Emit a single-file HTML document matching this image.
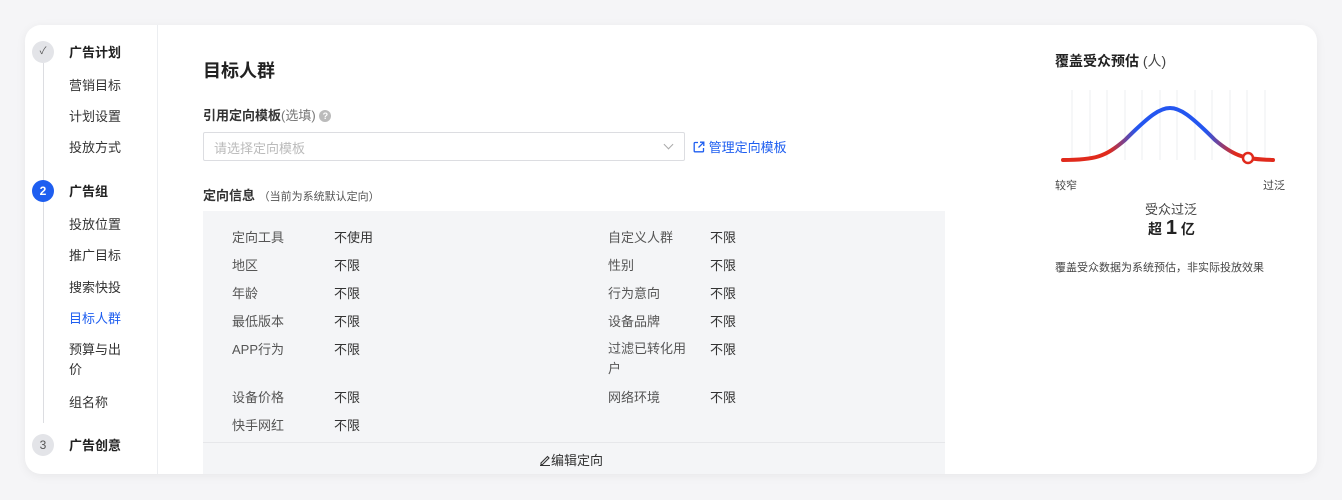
<!DOCTYPE html>
<html><head><meta charset="utf-8"><style>
*{margin:0;padding:0;box-sizing:border-box}
body{width:1342px;height:500px;background:#f5f5f7;font-family:"Liberation Sans","Noto Sans CJK SC",sans-serif;position:relative;overflow:hidden;color:#333}
.card{position:absolute;left:25px;top:25px;width:1292px;height:449px;background:#fff;border-radius:16px;box-shadow:0 2px 10px rgba(0,0,0,.06);overflow:hidden}
.side{position:absolute;left:0;top:0;width:133px;height:449px;border-right:1px solid #eceef1}
.t{position:absolute;font-size:13px;white-space:nowrap;color:#333}
.h{font-weight:bold;color:#222}
.c{position:absolute;width:22px;height:22px;border-radius:50%;left:7px;font-size:12px;text-align:center;line-height:22px;background:#e3e4e8;color:#555}
.a{position:absolute;font-size:13px;color:#333}
.g{color:#555}
</style></head><body>
<div class="card">
<div class="side">
<div style="position:absolute;left:18px;top:38px;width:1px;height:360px;background:#dcdde1"></div>
<div class="c" style="top:16px;font-size:10px">✓</div>
<div class="t h" style="left:44px;top:17px">广告计划</div>
<div class="t" style="left:44px;top:50px">营销目标</div>
<div class="t" style="left:44px;top:81px">计划设置</div>
<div class="t" style="left:44px;top:112px">投放方式</div>
<div class="c" style="top:155px;background:#1e5ef0;color:#fff;font-weight:bold">2</div>
<div class="t h" style="left:44px;top:156px">广告组</div>
<div class="t" style="left:44px;top:189px">投放位置</div>
<div class="t" style="left:44px;top:220px">推广目标</div>
<div class="t" style="left:44px;top:252px">搜索快投</div>
<div class="t" style="left:44px;top:283px;color:#1e5ef0">目标人群</div>
<div class="t" style="left:44px;top:315px;line-height:20px;white-space:normal;width:60px">预算与出价</div>
<div class="t" style="left:44px;top:367px">组名称</div>
<div class="c" style="top:409px">3</div>
<div class="t h" style="left:44px;top:410px">广告创意</div>
</div>
<div class="t h" style="left:178px;top:32px;font-size:18px">目标人群</div>
<div class="t" style="left:178px;top:80px;font-weight:bold">引用定向模板<span style="font-weight:normal;color:#777">(选填)</span> <span style="display:inline-block;width:12px;height:12px;border-radius:50%;background:#bbb;color:#fff;font-size:9px;text-align:center;line-height:12px;vertical-align:1px">?</span></div>
<div style="position:absolute;left:178px;top:107px;width:482px;height:29px;border:1px solid #dcdde1;border-radius:2px"><span class="t" style="left:10px;top:5px;color:#bbb">请选择定向模板</span><span style="position:absolute;right:12px;top:8px;width:7px;height:7px;border-right:1px solid #aaa;border-bottom:1px solid #aaa;transform:rotate(45deg)"></span></div>
<div class="t" style="left:668px;top:112px;color:#1e5ef0"><svg width="12" height="12" viewBox="0 0 12 12" style="vertical-align:-1px" fill="none" stroke="#1e5ef0" stroke-width="1.3"><path d="M5 1.5H2a.8.8 0 0 0-.8.8v7.7a.8.8 0 0 0 .8.8h7.7a.8.8 0 0 0 .8-.8V7M7 1.2h3.8V5M10.6 1.4 5.5 6.5"/></svg> 管理定向模板</div>
<div class="t" style="left:178px;top:160px;font-weight:bold">定向信息 <span style="font-weight:normal;font-size:11px;color:#555">（当前为系统默认定向）</span></div>
<div style="position:absolute;left:178px;top:186px;width:742px;height:263px;background:#f4f5f7">
<div style="position:absolute;left:0;top:231px;width:742px;height:1px;background:#e6e7ea"></div>
<div class="t" style="left:336px;top:239px;color:#333"><svg width="12" height="12" viewBox="0 0 12 12" fill="none" stroke="#333" stroke-width="1.1" style="vertical-align:-1px"><path d="M2 9 8.5 2.5l1.5 1.5L3.5 10.5H2zM1 11.5h10"/></svg>编辑定向</div>
</div>
<div class="a g" style="left:207px;top:202px">定向工具</div><div class="a" style="left:309px;top:202px">不使用</div>
<div class="a g" style="left:207px;top:230px">地区</div><div class="a" style="left:309px;top:230px">不限</div>
<div class="a g" style="left:207px;top:258px">年龄</div><div class="a" style="left:309px;top:258px">不限</div>
<div class="a g" style="left:207px;top:286px">最低版本</div><div class="a" style="left:309px;top:286px">不限</div>
<div class="a g" style="left:207px;top:314px">APP行为</div><div class="a" style="left:309px;top:314px">不限</div>
<div class="a g" style="left:207px;top:362px">设备价格</div><div class="a" style="left:309px;top:362px">不限</div>
<div class="a g" style="left:207px;top:390px">快手网红</div><div class="a" style="left:309px;top:390px">不限</div>
<div class="a g" style="left:583px;top:202px">自定义人群</div><div class="a" style="left:685px;top:202px">不限</div>
<div class="a g" style="left:583px;top:230px">性别</div><div class="a" style="left:685px;top:230px">不限</div>
<div class="a g" style="left:583px;top:258px">行为意向</div><div class="a" style="left:685px;top:258px">不限</div>
<div class="a g" style="left:583px;top:286px">设备品牌</div><div class="a" style="left:685px;top:286px">不限</div>
<div class="a g" style="left:583px;top:314px;width:90px;line-height:20px">过滤已转化用户</div><div class="a" style="left:685px;top:314px">不限</div>
<div class="a g" style="left:583px;top:362px">网络环境</div><div class="a" style="left:685px;top:362px">不限</div>
<div class="t h" style="left:1030px;top:26px;font-size:14px">覆盖受众预估 <span style="font-weight:normal;color:#444">(人)</span></div>
<svg style="position:absolute;left:1030px;top:60px" width="230" height="95" viewBox="0 0 230 95">
<defs><linearGradient id="gr" x1="0" x2="1"><stop offset="0" stop-color="#e02a1c"/><stop offset=".22" stop-color="#e02a1c"/><stop offset=".35" stop-color="#2456f0"/><stop offset=".68" stop-color="#2456f0"/><stop offset=".82" stop-color="#e02a1c"/><stop offset="1" stop-color="#e02a1c"/></linearGradient></defs>
<g stroke="#eeeff2" stroke-width="1"><path d="M17 5V75M35 5V75M52 5V75M70 5V75M87 5V75M105 5V75M122 5V75M140 5V75M157 5V75M175 5V75M192 5V75M210 5V75"/></g>
<path d="M8 75C40 75 50 72 70 55C95 30 105 23 115 23C125 23 135 30 160 55C180 72 190 74 218 75" fill="none" stroke="url(#gr)" stroke-width="4" stroke-linecap="round"/>
<circle cx="193" cy="73" r="5" fill="#fff" stroke="#e02a1c" stroke-width="2.5"/>
</svg>
<div class="t" style="left:1030px;top:152px;font-size:11px;color:#444">较窄</div>
<div class="t" style="left:1238px;top:152px;font-size:11px;color:#444">过泛</div>
<div class="t" style="left:1120px;top:174px;color:#444">受众过泛</div>
<div class="t h" style="left:1123px;top:192px;font-size:14px">超 <span style="font-size:20px">1</span> 亿</div>
<div class="t" style="left:1030px;top:234px;font-size:11px;color:#444">覆盖受众数据为系统预估，非实际投放效果</div>
</div>
</body></html>
